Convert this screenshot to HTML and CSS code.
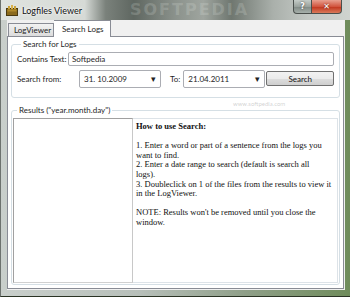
FILE: index.html
```html
<!DOCTYPE html>
<html lang="en">
<head>
    <meta charset="UTF-8">
    <title>Logfiles Viewer</title>
    <link rel="stylesheet" href="styles.css">
</head>
<body>
    <div class="window">
        <div class="titlebar">
            <svg class="app-icon" width="12" height="11" viewBox="0 0 12 11">
                <rect x="0.5" y="3.5" width="11" height="7" fill="#8a6a1c" stroke="#4a3a10"/>
                <rect x="2" y="1" width="2" height="3" fill="#c9a23a"/>
                <rect x="5" y="0" width="2" height="4" fill="#d9b24a"/>
                <rect x="8" y="1" width="2" height="3" fill="#c9a23a"/>
                <rect x="1.5" y="4.5" width="9" height="2" fill="#b08a2a"/>
            </svg>
            <span class="title">Logfiles Viewer</span>
            <span class="watermark">SOFTPEDIA</span>
            <div class="controls">
                <span class="help">?</span>
                <span class="close">&#x2715;</span>
            </div>
        </div>
        <div class="client">
            <div class="tabs">
                <div class="tab">LogViewer</div>
                <div class="tab active">Search Logs</div>
            </div>
            <div class="page">
                <fieldset class="group search">
                    <legend>Search for Logs</legend>
                    <div class="row">
                        <span class="label contains">Contains Text:</span>
                        <div class="textbox">Softpedia</div>
                    </div>
                    <div class="row">
                        <span class="label from">Search from:</span>
                        <div class="date">31. 10.2009<span class="arrow">&#x25BE;</span></div>
                        <span class="label to">To:</span>
                        <div class="date">21.04.2011<span class="arrow">&#x25BE;</span></div>
                        <button class="btn">Search</button>
                    </div>
                    <div class="site">www.softpedia.com</div>
                </fieldset>
                <fieldset class="group results">
                    <legend>Results ("year.month.day")</legend>
                    <div class="list"></div>
                    <div class="info">
                        <p><b>How to use Search:</b></p>
                        <p>1. Enter a word or part of a sentence from the logs you<br>
                        want to find.<br>
                        2. Enter a date range to search (default is search all<br>
                        logs).<br>
                        3. Doubleclick on 1 of the files from the results to view it<br>
                        in the LogViewer.</p>
                        <p>NOTE: Results won't be removed until you close the<br>
                        window.</p>
                    </div>
                </fieldset>
            </div>
        </div>
    </div>
</body>
</html>
```

FILE: styles.css
```css
* {
    margin: 0;
    padding: 0;
    box-sizing: border-box;
}

body {
    width: 350px;
    height: 297px;
    overflow: hidden;
    font-family: Lato, 'Liberation Sans', sans-serif;
    font-size: 8px;
    color: #1e1e1e;
    white-space: nowrap;
}

.window {
    width: 350px;
    height: 297px;
    display: flex;
    flex-direction: column;
    padding: 0 5px 6px 6px;
    background: linear-gradient(90deg, #c9cfcb 0%, #b7bfb9 40%, #8f9f88 70%, #6f8c5b 100%);
    border-left: 1px solid #6d726e;
    border-bottom: 1px solid #2a3324;
}

.titlebar {
    height: 20px;
    margin: 0 -5px 0 -6px;
    padding: 0 5px 0 5px;
    display: flex;
    align-items: center;
    position: relative;
    overflow: hidden;
    background: linear-gradient(90deg, #dfe3df 0%, #d6dad6 24%, #7a817b 30%, #5f6761 38%, #8b928c 50%, #9fa59f 58%, #6f7770 66%, #aab0ab 78%, #c3c8c4 88%, #cfd3cf 100%);
}

.app-icon {
    margin: 0 4px 0 0;
}

.title {
    font-size: 9px;
    color: #101010;
    text-shadow: 0 0 4px #ffffff, 0 0 2px #ffffff;
}

.watermark {
    margin-left: 48px;
    font-family: 'DejaVu Sans', sans-serif;
    font-weight: bold;
    font-size: 16px;
    line-height: 20px;
    letter-spacing: 2px;
    color: rgba(230, 235, 230, 0.2);
}

.controls {
    position: absolute;
    top: 0;
    right: 8px;
    display: flex;
}

.controls span {
    height: 14px;
    display: flex;
    align-items: center;
    justify-content: center;
    color: #ffffff;
    font-family: 'DejaVu Sans', sans-serif;
    font-weight: bold;
    border: 1px solid #4a4f4c;
    border-top: none;
}

.help {
    width: 19px;
    font-size: 8px;
    border-radius: 0 0 0 4px;
    background: linear-gradient(#c5ccc8, #9aa39e 50%, #7f8984 51%, #a7b0ab);
    text-shadow: 0 0 2px #333;
}

.close {
    width: 30px;
    font-size: 8px;
    border-left: none !important;
    border-radius: 0 0 4px 0;
    background: linear-gradient(#e8a090, #d2553f 50%, #c0331c 51%, #d97a5a);
    text-shadow: 0 0 2px #5a1a10;
}

.client {
    flex: 1;
    display: flex;
    flex-direction: column;
    background: #f0f0f0;
    padding: 0 1px 1px 0;
}

.tabs {
    height: 16px;
    display: flex;
    align-items: flex-end;
    padding-left: 1px;
}

.tab {
    height: 13px;
    padding: 0 5px;
    width: 46px;
    display: flex;
    align-items: center;
    border: 1px solid #898c95;
    border-bottom: none;
    background: linear-gradient(#f2f2f2, #dcdcdc);
}

.tab.active {
    width: 57px;
    height: 17px;
    margin-bottom: -1px;
    background: #ffffff;
    position: relative;
    z-index: 1;
    padding-left: 8px;
    border-left: none;
}

.page {
    flex: 1;
    background: #ffffff;
    border: 1px solid #898c95;
    display: flex;
    flex-direction: column;
    padding: 2px 3px 3px 3px;
}

.group {
    border: 1px solid #d5dfe5;
    border-radius: 3px;
    padding: 0 5px;
    position: relative;
}

.group legend {
    margin-left: 4px;
    padding: 0 2px;
    line-height: 10px;
}

.search {
    height: 59px;
    padding-top: 3px;
}

.row {
    display: flex;
    align-items: center;
    height: 17px;
    margin-bottom: 3px;
}

.row:first-of-type {
    height: 14px;
    margin-bottom: 4px;
}

.label {
    flex-shrink: 0;
}

.label.contains {
    width: 51px;
}

.label.from {
    width: 62px;
}

.textbox {
    flex: 1;
    height: 14px;
    border: 1px solid #abadb3;
    border-radius: 2px;
    padding-left: 3px;
    line-height: 12px;
}

.date {
    width: 82px;
    height: 18px;
    border: 1px solid #abadb3;
    border-radius: 2px;
    padding-left: 4px;
    display: flex;
    align-items: center;
    justify-content: space-between;
}

.arrow {
    font-size: 9px;
    margin-right: 4px;
    color: #222;
}

.label.to {
    margin: 0 3px 0 9px;
}

.btn {
    width: 68px;
    height: 15px;
    margin-left: 1px;
    font-family: inherit;
    font-size: 8px;
    color: #111;
    border: 1px solid #707070;
    border-radius: 2px;
    background: linear-gradient(#f2f2f2 0%, #ebebeb 50%, #dddddd 51%, #cfcfcf 100%);
}

.site {
    position: absolute;
    right: 54px;
    top: 51px;
    font-size: 6px;
    color: rgba(120, 120, 120, 0.35);
}

.results {
    flex: 1;
    margin-top: 7px;
    display: flex;
    padding: 3px 1px 1px 1px;
}

.list {
    width: 120px;
    border: 1px solid #a0a0a0;
    border-right-color: #c8c8c8;
    border-bottom-color: #d0d0d0;
}

.info {
    flex: 1;
    border: 1px solid #dde3e8;
    border-left: none;
    padding: 3px 1px 0 3px;
    font-family: 'Liberation Serif', serif;
    font-size: 8.5px;
    line-height: 9.6px;
    color: #111;
    overflow: hidden;
}

.info p {
    margin-bottom: 9.6px;
}
```
